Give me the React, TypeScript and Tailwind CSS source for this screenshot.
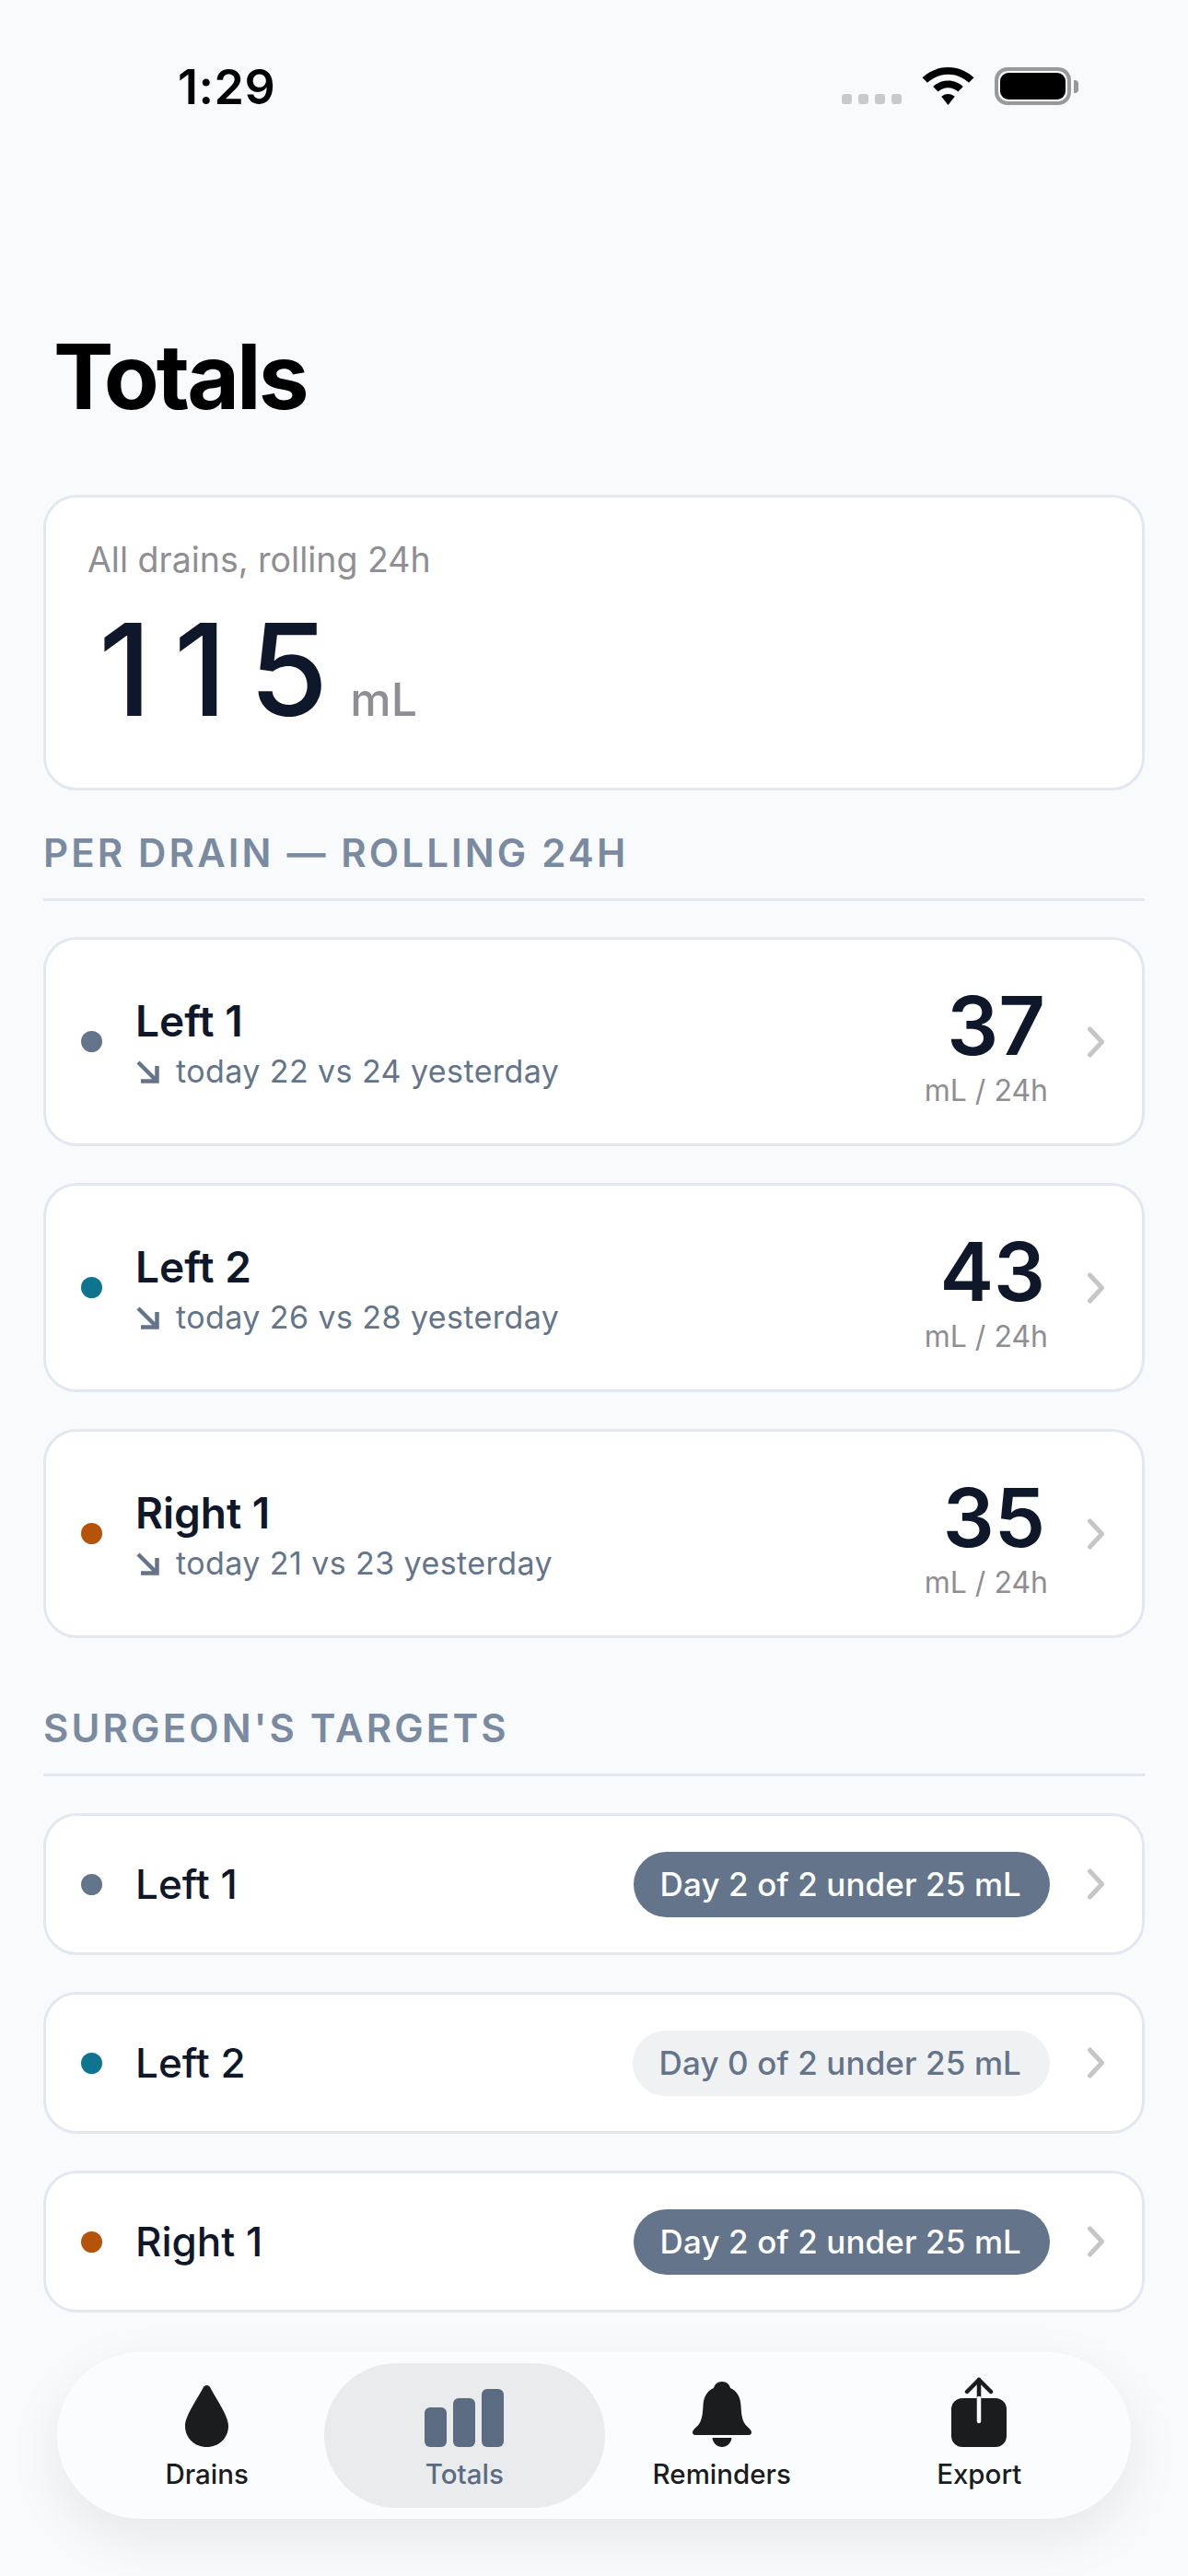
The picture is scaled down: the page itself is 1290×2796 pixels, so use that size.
import React from "react";

const SANS = "font-['Inter','Liberation_Sans',sans-serif]";

const Chevron = () => (
  <svg width="20" height="34" viewBox="0 0 20 34" fill="none" className="shrink-0">
    <path d="M3.500 3 16.500 17 3.500 31" stroke="#c6c6c8" strokeWidth="5" strokeLinecap="round" strokeLinejoin="round" />
  </svg>
);

const TrendArrow = () => (
  <svg width="26" height="26" viewBox="0 0 26 26" fill="none" className="shrink-0">
    <path d="M3 3 23 23M6 23.500h17.500V7" stroke="#64748b" strokeWidth="4.500" strokeLinejoin="miter" />
  </svg>
);

const Wifi = () => (
  <svg width="57" height="41" viewBox="0 0 57 41" fill="#000">
    <path d="M28.500 0C17.600 0 8 4.300 0.500 11.300L6 16.800C12 11.200 19.800 7.800 28.500 7.800S45 11.200 51 16.800L56.500 11.300C49 4.300 39.400 0 28.500 0Z" />
    <path d="M28.500 14.500C22.200 14.500 16.500 17 12.200 21L17.600 26.500C20.500 23.800 24.300 22.200 28.500 22.200S36.500 23.800 39.400 26.500L44.800 21C40.500 17 34.800 14.500 28.500 14.500Z" />
    <path d="M28.500 29C25.700 29 23.200 30.100 21.200 31.800L28.500 41 35.800 31.800C33.800 30.100 31.300 29 28.500 29Z" />
  </svg>
);

const Drop = () => (
  <svg width="47" height="67" viewBox="0 0 47 67" fill="#1a1c1e">
    <path d="M23.500 0C25.500 0 26.500 1 27.500 2.800 33 14 47 33 47 44 47 57.500 36.500 67 23.500 67S0 57.500 0 44C0 33 14 14 19.500 2.800 20.500 1 21.500 0 23.500 0Z" />
  </svg>
);

const Bars = () => (
  <div className="flex h-[63px] items-end gap-[7px]">
    <div className="h-[43px] w-[24px] rounded-[6px] bg-[#5b6b82]" />
    <div className="h-[53px] w-[24px] rounded-[6px] bg-[#5b6b82]" />
    <div className="h-[63px] w-[24px] rounded-[6px] bg-[#5b6b82]" />
  </div>
);

const Bell = () => (
  <svg width="64" height="71" viewBox="0 0 64 71" fill="#1a1c1e">
    <path d="M32 0C37 0 40 3 41 7 48 10 52 16 52.500 26 53 36 54 42 57 46 59 49 64 52 64 55 64 57 63 58 61 58H3C1 58 0 57 0 55 0 52 5 49 7 46 10 42 11 36 11.500 26 12 16 16 10 23 7 24 3 27 0 32 0Z" />
    <path d="M21.500 61H42.500C42 67 37 71 32 71S22 67 21.500 61Z" />
  </svg>
);

const ExportIcon = () => (
  <svg width="60" height="76" viewBox="0 0 60 76" fill="none">
    <rect x="0" y="23" width="60" height="53" rx="12" fill="#1a1c1e" />
    <path d="M30 3V23" stroke="#1a1c1e" strokeWidth="4.500" strokeLinecap="round" />
    <path d="M30 23V48" stroke="#fbfcfd" strokeWidth="4.500" strokeLinecap="round" />
    <path d="M17 16 30 3 43 16" stroke="#1a1c1e" strokeWidth="4.500" strokeLinecap="round" strokeLinejoin="round" />
  </svg>
);

const Dot = ({ color }: { color: string }) => (
  <div className={`h-[23px] w-[23px] shrink-0 rounded-full ${color}`} />
);

const SectionHeader = ({ title }: { title: string }) => (
  <div className="border-b-[3px] border-[#e2e8f0] pb-[17px]">
    <h2 className="text-[42px] leading-[64px] font-semibold tracking-[3.150px] text-[#7a8aa0]">{title}</h2>
  </div>
);

const drains = [
  { name: "Left 1", dot: "bg-[#64748b]", sub: "today 22 vs 24 yesterday", total: 37 },
  { name: "Left 2", dot: "bg-[#0e7490]", sub: "today 26 vs 28 yesterday", total: 43 },
  { name: "Right 1", dot: "bg-[#b45309]", sub: "today 21 vs 23 yesterday", total: 35 },
];

const targets = [
  { name: "Left 1", dot: "bg-[#64748b]", badge: "Day 2 of 2 under 25 mL", met: true },
  { name: "Left 2", dot: "bg-[#0e7490]", badge: "Day 0 of 2 under 25 mL", met: false },
  { name: "Right 1", dot: "bg-[#b45309]", badge: "Day 2 of 2 under 25 mL", met: true },
];

const DrainCard = ({ name, dot, sub, total }: (typeof drains)[number]) => (
  <div className="flex h-[227px] items-center rounded-[36px] border-[3px] border-[#e2e8f0] bg-white pr-[40px] pl-[38px]">
    <Dot color={dot} />
    <div className="ml-[36px] min-w-0 flex-1 pt-[3px]">
      <p className="text-[46px] leading-[56px] font-semibold text-[#0f172a]">{name}</p>
      <div className="mt-[5px] flex items-center gap-[18px]">
        <TrendArrow />
        <p className="text-[34px] leading-[44px] tracking-[0.420px] text-[#64748b]">{sub}</p>
      </div>
    </div>
    <div className="mr-[42px] flex flex-col items-end pt-[10px]">
      <p className="pr-[3px] text-[88px] leading-[88px] font-semibold text-[#0f172a]">{total}</p>
      <p className="mt-[8px] text-[32px] leading-[38px] text-[#8e8e93]">mL / 24h</p>
    </div>
    <Chevron />
  </div>
);

const TargetRow = ({ name, dot, badge, met }: (typeof targets)[number]) => (
  <div className="flex h-[154px] items-center rounded-[36px] border-[3px] border-[#e2e8f0] bg-white pr-[40px] pl-[38px]">
    <Dot color={dot} />
    <p className="ml-[36px] flex-1 text-[44px] leading-[56px] font-medium text-[#0f172a]">{name}</p>
    <div
      className={`mr-[40px] flex h-[71px] items-center rounded-full pr-[31px] pl-[29px] text-[35px] font-[550] tracking-[0.100px] ${
        met ? "bg-[#64748b] text-white" : "bg-[#f0f1f3] text-[#64748b]"
      }`}
    >
      {badge}
    </div>
    <Chevron />
  </div>
);

const tabs = [
  { label: "Drains", icon: <Drop /> },
  { label: "Totals", icon: <Bars />, active: true },
  { label: "Reminders", icon: <Bell /> },
  { label: "Export", icon: <ExportIcon /> },
];

export default function App() {
  return (
    <div className={`${SANS} relative h-[2796px] w-[1290px] overflow-hidden bg-[#f8fafc]`}>
      {/* status bar */}
      <div className="flex h-[349px] items-start justify-between pt-[64px] pr-[119px] pl-[193px]">
        <span className="text-[52px] leading-[62px] font-semibold tracking-[0.500px] text-black">1:29</span>
        <div className="flex items-end gap-[22px] pt-[9px]">
          <div className="flex gap-[7px] pb-[1px]">
            <div className="h-[11px] w-[11px] rounded-[3px] bg-[#c9c9cb]" />
            <div className="h-[11px] w-[11px] rounded-[3px] bg-[#c9c9cb]" />
            <div className="h-[11px] w-[11px] rounded-[3px] bg-[#c9c9cb]" />
            <div className="h-[11px] w-[11px] rounded-[3px] bg-[#c9c9cb]" />
          </div>
          <Wifi />
          <div className="flex items-center gap-[3px]">
            <div className="h-[41px] w-[83px] rounded-[14px] border-[4px] border-[#999999] p-[2px]">
              <div className="h-full w-full rounded-[9px] bg-black" />
            </div>
            <div className="h-[14px] w-[5px] rounded-r-[4px] bg-[#999999]" />
          </div>
        </div>
      </div>

      <h1 className="pl-[58px] text-[98px] leading-[120px] font-bold tracking-[-3px] text-black">Totals</h1>

      <main className="px-[47px] pt-[68px]">
        <section className="flex h-[321px] flex-col rounded-[36px] border-[3px] border-[#e2e8f0] bg-white pt-[45px] pl-[45px]">
          <p className="text-[37.500px] leading-[46px] text-[#8e8e93]">All drains, rolling 24h</p>
          <div className="mt-[31px] flex items-baseline pl-[12px]">
            <span className="text-[139px] leading-[130px] font-[550] tracking-[24px] text-[#0f172a]">115</span>
            <span className="text-[50px] leading-[60px] font-medium text-[#8e8e93]">mL</span>
          </div>
        </section>

        <div className="mt-[36px]">
          <SectionHeader title="PER DRAIN — ROLLING 24H" />
        </div>
        <div className="mt-[39px] flex flex-col gap-[40px]">
          {drains.map((d) => (
            <DrainCard key={d.name} {...d} />
          ))}
        </div>

        <div className="mt-[66px]">
          <SectionHeader title="SURGEON'S TARGETS" />
        </div>
        <div className="mt-[40px] flex flex-col gap-[40px]">
          {targets.map((t) => (
            <TargetRow key={t.name} {...t} />
          ))}
        </div>
      </main>

      {/* floating tab bar */}
      <nav className="absolute top-[2553px] left-[62px] grid h-[181px] w-[1166px] grid-cols-4 items-center rounded-full bg-[#fbfcfd] pr-[25px] pl-[23px] shadow-[0_20px_60px_rgba(0,0,0,0.08)]">
        {tabs.map((t) => (
          <div key={t.label} className="relative flex h-[157px] flex-col items-center justify-end pb-[19px]">
            {t.active && <div className="absolute -inset-x-[13px] inset-y-0 rounded-full bg-[#e9ebec]" />}
            <div className="relative flex flex-1 items-end pb-[11px]">{t.icon}</div>
            <span
              className={`relative text-[29.500px] leading-[36px] font-medium ${
                t.active ? "text-[#5b6b82]" : "text-[#1a1c1e]"
              }`}
            >
              {t.label}
            </span>
          </div>
        ))}
      </nav>
    </div>
  );
}
